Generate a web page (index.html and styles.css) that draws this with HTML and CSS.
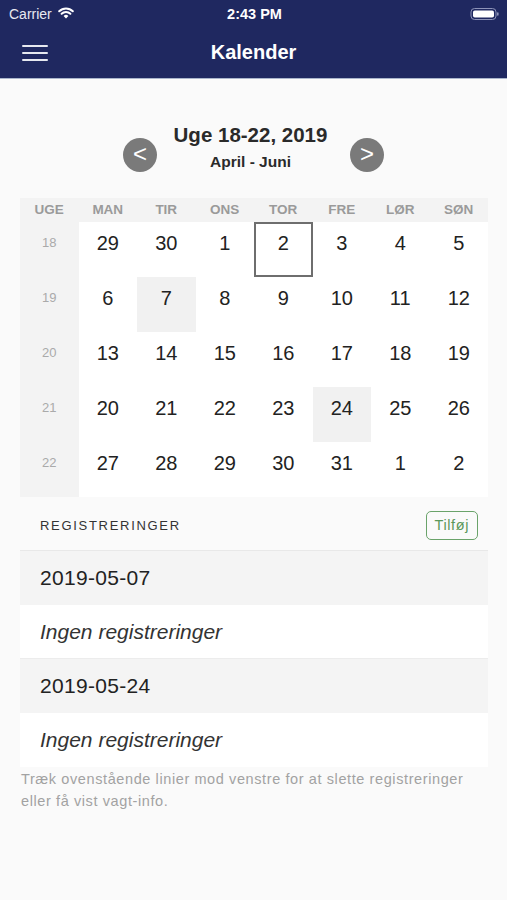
FILE: index.html
```html
<!DOCTYPE html>
<html lang="da">
<head>
<meta charset="utf-8">
<title>Kalender</title>
<link rel="stylesheet" href="styles.css">
</head>
<body>
<header class="top">
  <div class="status">
    <div class="status-left">
      <span>Carrier</span>
      <svg class="wifi" width="16" height="12" viewBox="0 0 16 12">
        <path d="M8 11.5 L5.6 8.9 A3.4 3.4 0 0 1 10.4 8.9 Z" fill="#fff"/>
        <path d="M3.6 6.8 A6.3 6.3 0 0 1 12.4 6.8" stroke="#fff" stroke-width="2" fill="none" stroke-linecap="round"/>
        <path d="M1.2 4.2 A9.6 9.6 0 0 1 14.8 4.2" stroke="#fff" stroke-width="2" fill="none" stroke-linecap="round"/>
      </svg>
    </div>
    <div class="status-time">2:43 PM</div>
    <div class="status-right">
      <svg width="30" height="14" viewBox="0 0 30 14">
        <rect x="1" y="1.5" width="25" height="11" rx="3.5" fill="none" stroke="#8d93b8" stroke-width="1"/>
        <rect x="3" y="3.5" width="21" height="7" rx="1.8" fill="#fff"/>
        <rect x="27" y="5.2" width="1.6" height="3.6" rx="0.8" fill="#8d93b8"/>
      </svg>
    </div>
  </div>
  <nav class="navbar">
    <div class="menu">
      <span></span><span></span><span></span>
    </div>
    <div class="nav-title">Kalender</div>
    <div class="nav-spacer"></div>
  </nav>
</header>

<main class="content">
  <section class="week-nav">
    <div class="circle-btn">&lt;</div>
    <div class="week-title">
      <div class="week-range">Uge 18-22, 2019</div>
      <div class="week-months">April - Juni</div>
    </div>
    <div class="circle-btn">&gt;</div>
  </section>

  <section class="calendar">
    <div class="hd wk">UGE</div>
    <div class="hd">MAN</div>
    <div class="hd">TIR</div>
    <div class="hd">ONS</div>
    <div class="hd">TOR</div>
    <div class="hd">FRE</div>
    <div class="hd">LØR</div>
    <div class="hd">SØN</div>

    <div class="wkn">18</div>
    <div class="day">29</div><div class="day">30</div><div class="day">1</div><div class="day today">2</div><div class="day">3</div><div class="day">4</div><div class="day">5</div>

    <div class="wkn">19</div>
    <div class="day">6</div><div class="day marked">7</div><div class="day">8</div><div class="day">9</div><div class="day">10</div><div class="day">11</div><div class="day">12</div>

    <div class="wkn">20</div>
    <div class="day">13</div><div class="day">14</div><div class="day">15</div><div class="day">16</div><div class="day">17</div><div class="day">18</div><div class="day">19</div>

    <div class="wkn">21</div>
    <div class="day">20</div><div class="day">21</div><div class="day">22</div><div class="day">23</div><div class="day marked">24</div><div class="day">25</div><div class="day">26</div>

    <div class="wkn">22</div>
    <div class="day">27</div><div class="day">28</div><div class="day">29</div><div class="day">30</div><div class="day">31</div><div class="day">1</div><div class="day">2</div>
  </section>

  <section class="regs">
    <div class="regs-head">
      <span class="regs-label">REGISTRERINGER</span>
      <span class="add-btn">Tilføj</span>
    </div>
    <div class="reg-date">2019-05-07</div>
    <div class="reg-empty">Ingen registreringer</div>
    <div class="reg-date">2019-05-24</div>
    <div class="reg-empty last">Ingen registreringer</div>
  </section>

  <p class="hint">Træk ovenstående linier mod venstre for at slette registreringer eller få vist vagt-info.</p>
</main>
</body>
</html>
```

FILE: styles.css
```css
* { box-sizing: border-box; }
html, body { margin: 0; padding: 0; }
body {
  background: #fafafa;
  font-family: "Liberation Sans", Arial, sans-serif;
  color: #222;
  width: 507px;
}

.top {
  background: #1f2860;
  color: #fff;
  border-bottom: 1px solid #aab6cc;
}
.status {
  height: 28px;
  display: flex;
  align-items: center;
  justify-content: space-between;
  padding: 0 7px 0 9px;
  font-size: 14px;
}
.status-left { display: flex; align-items: center; gap: 6px; width: 100px; }
.status-left span { color: #e8e9f0; }
.wifi { margin-top: -2px; }
.status-time { font-weight: bold; font-size: 14.5px; }
.status-right { width: 100px; display: flex; justify-content: flex-end; }

.navbar {
  height: 50px;
  display: flex;
  align-items: center;
  padding: 0 22px;
}
.menu { display: flex; flex-direction: column; gap: 5px; width: 26px; }
.menu span { display: block; height: 2px; background: #e6e8f0; border-radius: 1px; }
.nav-title {
  flex: 1;
  text-align: center;
  font-weight: bold;
  font-size: 20px;
  margin-top: -2px;
}
.nav-spacer { width: 26px; }

.content { padding: 0 19px 0 20px; }

.week-nav {
  display: flex;
  justify-content: center;
  align-items: flex-start;
  padding-top: 44px;
  margin-left: -20px;
  margin-right: -19px;
  height: 119px;
}
.circle-btn {
  width: 34px;
  height: 34px;
  border-radius: 50%;
  background: #7a7a7a;
  color: #fff;
  font-size: 24px;
  line-height: 32px;
  text-align: center;
  margin-top: 15px;
}
.week-title { width: 193px; text-align: center; padding-right: 6px; }
.week-range { font-weight: bold; font-size: 20.5px; line-height: 24px; color: #2a2a2a; }
.week-months { font-weight: bold; font-size: 15.5px; line-height: 18px; margin-top: 6px; color: #2a2a2a; }

.calendar {
  display: grid;
  grid-template-columns: repeat(8, 58.5px);
  grid-template-rows: 24px repeat(5, 55px);
  width: 468px;
  background: #fff;
}
.hd {
  background: #f3f3f3;
  color: #9a9a9a;
  font-weight: bold;
  font-size: 13.5px;
  text-align: center;
  line-height: 24px;
}
.wkn {
  background: #f3f3f3;
  color: #aaa;
  font-size: 13px;
  text-align: center;
  padding-top: 13px;
}
.day {
  text-align: center;
  font-size: 20px;
  padding-top: 10px;
  color: #222;
}
.day.today { border: 2px solid #6e6e6e; padding-top: 8px; }
.day.marked { background: #f1f1f1; }

.regs-head {
  height: 54px;
  display: flex;
  align-items: center;
  justify-content: space-between;
  padding: 4px 10px 0 20px;
  border-bottom: 1px solid #e8e8e8;
}
.regs-label {
  font-size: 13px;
  letter-spacing: 1.7px;
  color: #333;
}
.add-btn {
  border: 1px solid #6aa36a;
  border-radius: 5px;
  color: #5a985a;
  font-size: 14.5px;
  letter-spacing: 0.6px;
  padding: 5px 8px;
  line-height: 17px;
}
.reg-date {
  height: 54px;
  background: #f4f4f4;
  font-size: 21px;
  letter-spacing: 0.3px;
  padding-left: 20px;
  display: flex;
  align-items: center;
  color: #222;
}
.reg-empty {
  height: 54px;
  background: #fff;
  font-size: 21px;
  font-style: italic;
  padding-left: 20px;
  display: flex;
  align-items: center;
  color: #333;
  border-bottom: 1px solid #ececec;
}
.reg-empty.last { border-bottom: none; }

.hint {
  margin: 0;
  max-width: 450px;
  font-size: 14.5px;
  letter-spacing: 0.6px;
  line-height: 22px;
  color: #a2a2a2;
  margin-left: 1px;
  padding-top: 1px;
}
```
